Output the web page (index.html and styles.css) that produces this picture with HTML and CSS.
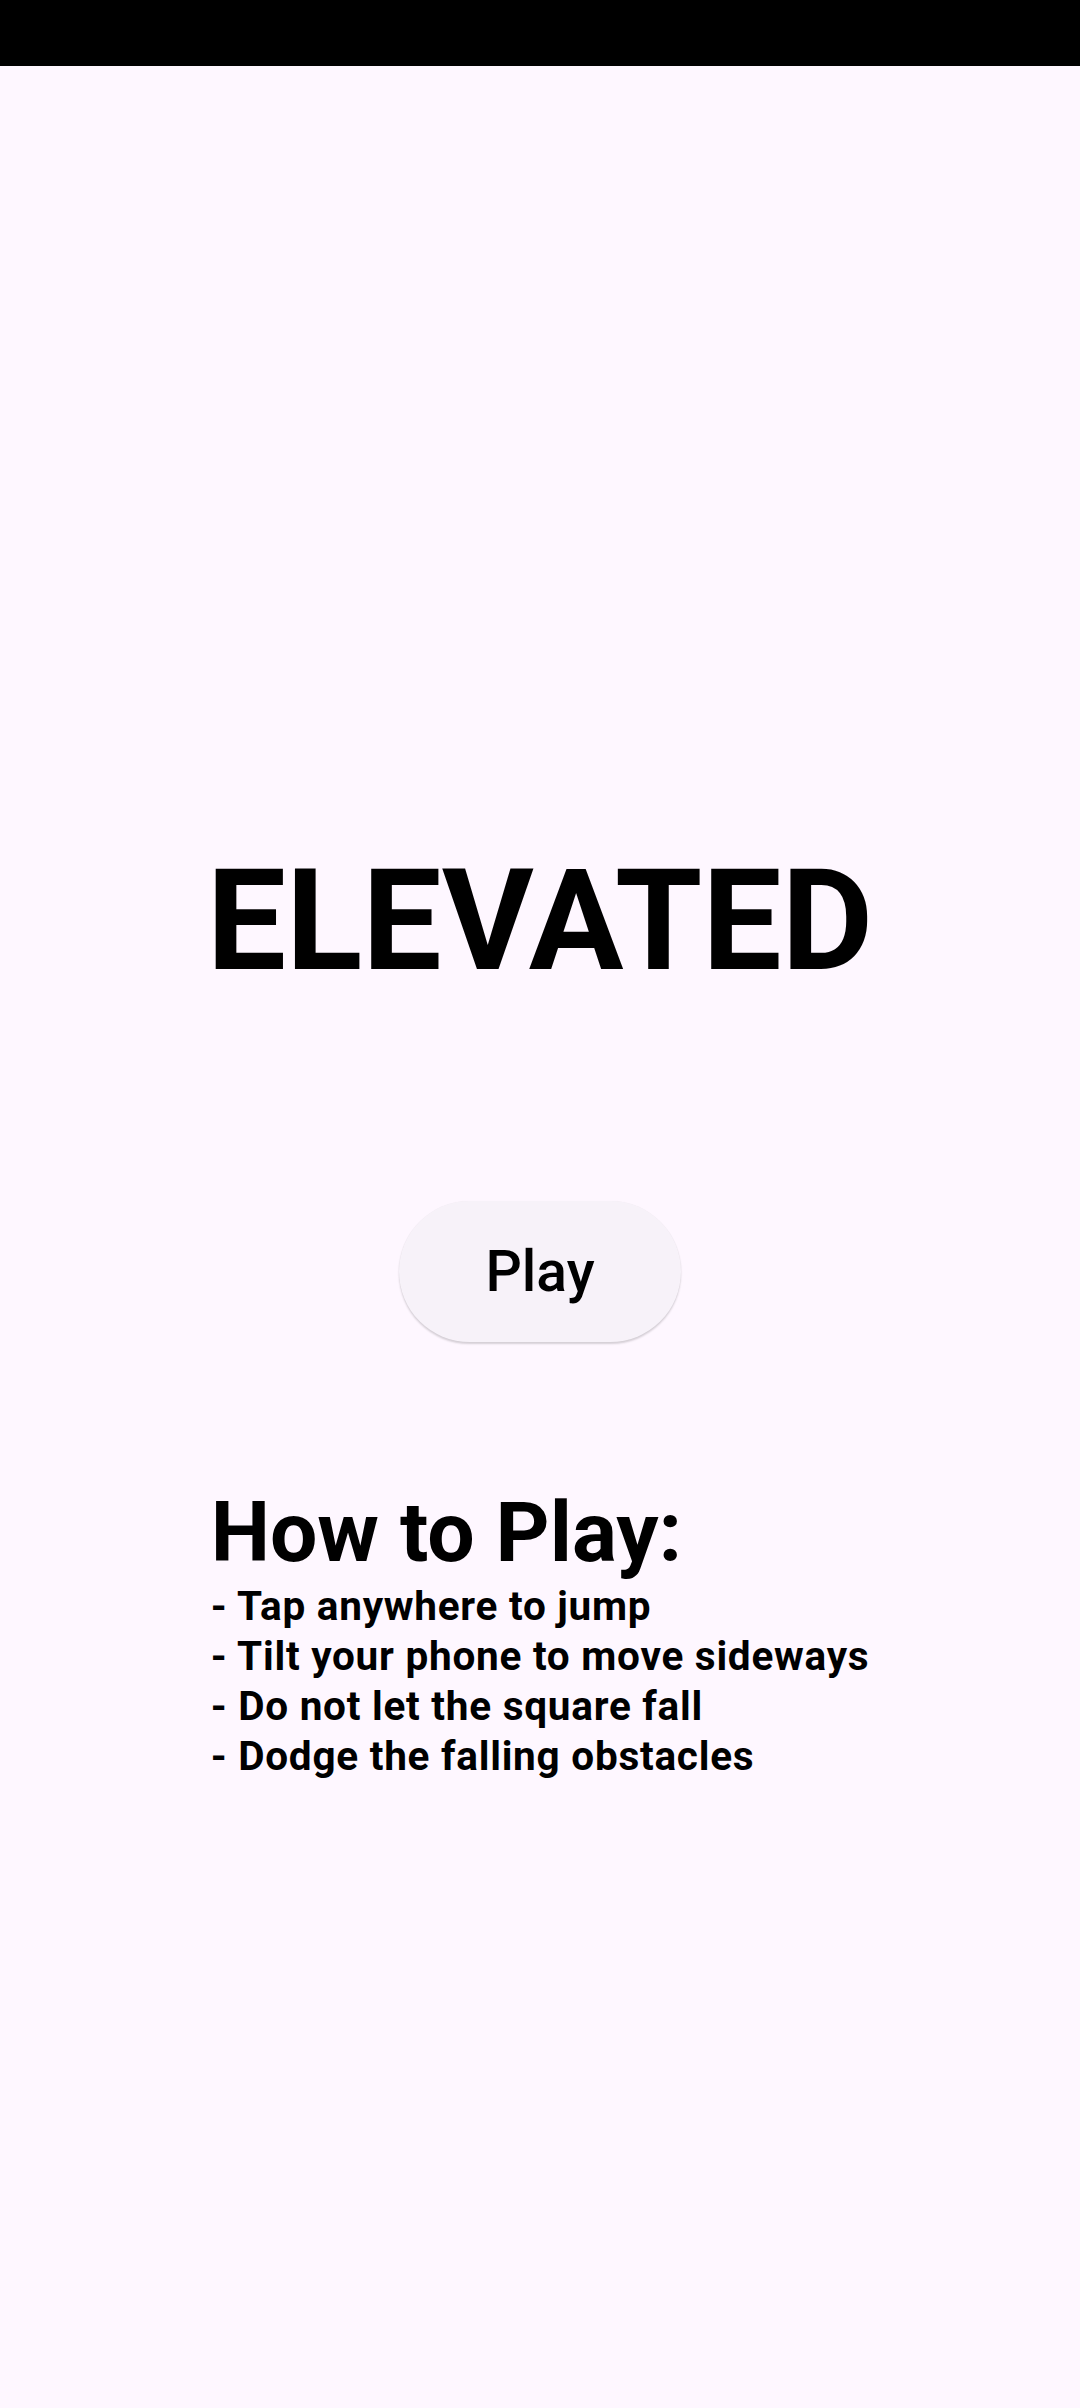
FILE: index.html
```html
<!DOCTYPE html>
<html lang="en">
<head>
<meta charset="utf-8">
<title>Elevated</title>
<link rel="stylesheet" href="styles.css">
</head>
<body>
<div class="status-bar"></div>
<main class="screen">
  <h1 class="title">ELEVATED</h1>
  <button class="play-btn" type="button">Play</button>
  <section class="howto">
    <h2 class="howto-title">How to Play:</h2>
    <p class="howto-line">- Tap anywhere to jump</p>
    <p class="howto-line">- Tilt your phone to move sideways</p>
    <p class="howto-line">- Do not let the square fall</p>
    <p class="howto-line">- Dodge the falling obstacles</p>
  </section>
</main>
</body>
</html>
```
FILE: styles.css
```css
html, body {
  margin: 0;
  padding: 0;
}
body {
  width: 1080px;
  height: 2408px;
  background: #fef7ff;
  font-family: Roboto, "Liberation Sans", sans-serif;
  color: #000;
  overflow: hidden;
}
.status-bar {
  height: 66px;
  background: #000;
}
.screen {
  display: flex;
  flex-direction: column;
  align-items: center;
}
.title {
  margin: 784px 0 0 0;
  font-size: 141px;
  line-height: 141px;
  font-weight: 700;
}
.play-btn {
  margin-top: 210px;
  width: 282px;
  height: 141px;
  border: none;
  border-radius: 71px;
  background: #f7f2f9;
  box-shadow: 0 2px 2px rgba(0,0,0,0.16), 0 0 1px rgba(0,0,0,0.06);
  font-family: Roboto, "Liberation Sans", sans-serif;
  font-size: 57px;
  font-weight: 500;
  color: #000;
  display: flex;
  align-items: center;
  justify-content: center;
  padding: 0;
}
.howto {
  margin-top: 149px;
  display: flex;
  flex-direction: column;
  align-items: flex-start;
}
.howto-title {
  margin: 0 0 6px 0;
  font-size: 84px;
  line-height: 84px;
  font-weight: 700;
}
.howto-line {
  margin: 0;
  font-size: 40.5px;
  line-height: 50px;
  font-weight: 700;
  letter-spacing: 0.75px;
}
```
